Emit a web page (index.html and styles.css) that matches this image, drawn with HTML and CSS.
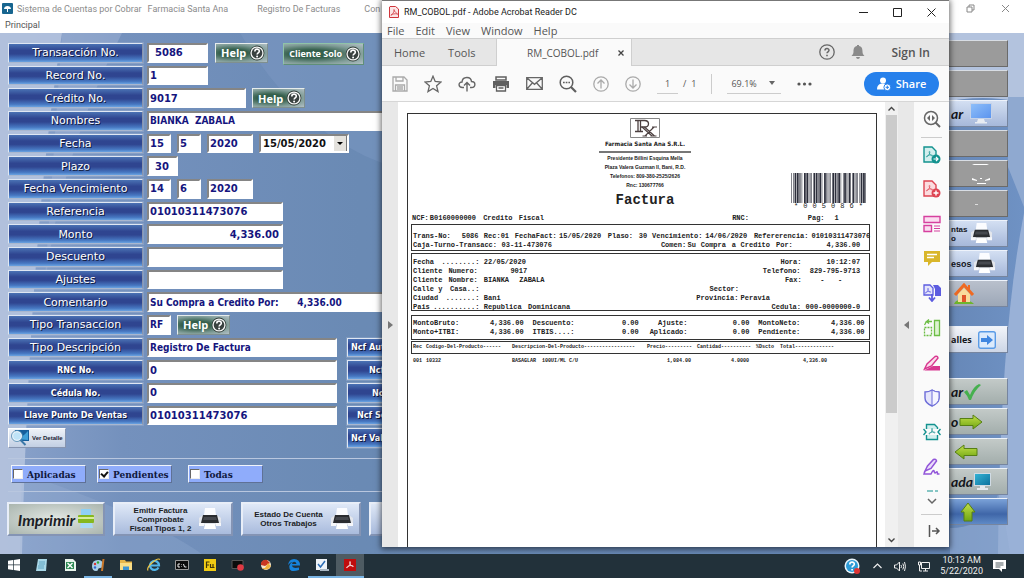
FILE: index.html
```html
<!DOCTYPE html>
<html lang="es">
<head>
<meta charset="utf-8">
<title>Sistema de Cuentas por Cobrar</title>
<link rel="stylesheet" href="styles.css">
</head>
<body>
<svg class="defs" width="0" height="0" aria-hidden="true">
  <defs>
    <linearGradient id="gGreen" x1="0" y1="0" x2="0" y2="1"><stop offset="0" stop-color="#c3e04a"/><stop offset="1" stop-color="#6fa512"/></linearGradient>
    <linearGradient id="gScreen" x1="0" y1="0" x2="1" y2="1"><stop offset="0" stop-color="#8fc0fa"/><stop offset="1" stop-color="#5b93ee"/></linearGradient>
    <linearGradient id="gTeal" x1="0" y1="0" x2="1" y2="1"><stop offset="0" stop-color="#35b5d6"/><stop offset="1" stop-color="#0b6f9c"/></linearGradient>
    <symbol id="printer" viewBox="0 0 24 24">
      <path d="M7 1h10l1 7H6z" fill="#fbfcff"/><path d="M1 11l4-3h14l4 3v7H1z" fill="#e3e6ec"/>
      <path d="M5 8h14l2 8H3z" fill="#2a2c30"/><path d="M6 10h12l1 3H5z" fill="#45484e"/>
      <path d="M7 17h10l1 5H6z" fill="#fff"/><path d="M1 16h5v3H1zM18 16h5v3h-5z" fill="#f6f7fa"/>
    </symbol>
    <symbol id="help" viewBox="0 0 16 16">
      <circle cx="8" cy="8" r="7.400" fill="#2e3a36"/><circle cx="8" cy="8" r="6.600" fill="#f4f6f4"/><circle cx="8" cy="8" r="5.300" fill="#3a4240"/>
      <path d="M5.800 6.400c0-3 4.600-2.900 4.500-.2C10.200 7.800 8.100 8 8.100 9.600" fill="none" stroke="#fff" stroke-width="1.600"/><circle cx="8.100" cy="11.500" r="1" fill="#fff"/>
    </symbol>
    <symbol id="pdf" viewBox="0 0 16 16"><path d="M8 2.500c1.500 0 .3 4-1.200 6.200S3.500 13 2.600 12.300 4.500 9.500 8 9s5.800.2 5.400 1.200-3-.2-4.400-2.200S6.800 2.500 8 2.500z" fill="none" stroke="currentColor" stroke-width="1.200"/></symbol>
    <g id="bStar"><path d="M0 0h1v30h-1zM4 0h1v30h-1zM6 0h3v30h-3zM10 0h3v30h-3zM14 0h1v30h-1z"/></g>
    <g id="b0"><path d="M0 0h1v30h-1zM2 0h1v30h-1zM6 0h3v30h-3zM10 0h3v30h-3zM14 0h1v30h-1z"/></g>
    <g id="b5"><path d="M0 0h3v30h-3zM4 0h1v30h-1zM8 0h3v30h-3zM12 0h1v30h-1zM14 0h1v30h-1z"/></g>
    <g id="b8"><path d="M0 0h3v30h-3zM4 0h1v30h-1zM8 0h1v30h-1zM10 0h3v30h-3zM14 0h1v30h-1z"/></g>
    <g id="b6"><path d="M0 0h1v30h-1zM2 0h3v30h-3zM8 0h3v30h-3zM12 0h1v30h-1zM14 0h1v30h-1z"/></g>
  </defs>
</svg>

<div class="desktop">
  <div class="app">
    <header class="app-title">
      <svg class="app-logo" viewBox="0 0 11 11"><rect width="11" height="11" rx="1" fill="#17658f"/><path d="M2 6c0-4 7-4 7 0z" fill="#fff"/><path d="M5 5h1v4h-1z" fill="#fff"/></svg>
      <span>Sistema de Cuentas por Cobrar</span><span>Farmacia Santa Ana</span><span class="title-gap">Registro De Facturas</span><span class="title-next">Con</span>
      <span class="app-controls">
        <button type="button" aria-label="Restaurar"><svg width="9" height="9" viewBox="0 0 9 9"><path d="M1 3h5v5H1zM3 3V1h5v5H6" fill="none" stroke="#888"/></svg></button>
        <button type="button" aria-label="Cerrar"><svg width="9" height="9" viewBox="0 0 9 9"><path d="M1 1l7 7M8 1l-7 7" stroke="#888"/></svg></button>
      </span>
    </header>
    <nav class="app-menu"><button type="button">Principal</button></nav>

    <main class="app-body">
      <svg class="backdrop" viewBox="0 0 1024 521" preserveAspectRatio="none" aria-hidden="true">
        <defs><linearGradient id="bg" x1="0" y1="0" x2="1" y2="0"><stop offset="0" stop-color="#8ba3cb"/><stop offset=".12" stop-color="#7491bd"/><stop offset=".35" stop-color="#6a8ab4"/><stop offset=".93" stop-color="#6788b8"/><stop offset="1" stop-color="#6f92c4"/></linearGradient></defs>
        <rect width="1024" height="521" fill="url(#bg)"/>
        <path d="M0 0h62Q30 200 22 521H0z" fill="#b7c5df" opacity=".85"/>
        <path d="M62 0h60Q60 120 44 260z" fill="#a3b6d8" opacity=".45"/>
        <path d="M22 440q120 40 180 81H20z" fill="#9db2d6" opacity=".25"/>
        <path d="M240 0h142v130Q300 100 240 0z" fill="#7f9cc6" opacity=".4"/>
        <path d="M940 0h84v70q-40-10-84 0z" fill="#b3c3de"/>
        <path d="M1008 64h16v110l-16-40z" fill="#8fa9d0"/>
        <path d="M1024 180v341h-26q2-220 26-341z" fill="#a4b9dc" opacity=".8"/>
        <path d="M950 495q40 0 50-40l10 66h-60z" fill="#93abd2" opacity=".6"/>
      </svg>

      <form class="work">
        <div class="fields">
          <label for="f1">Transacción No.</label>
          <div class="cell"><input id="f1" class="w60 ind" value="5086"><button type="button" class="help push">Help <svg><use href="#help"/></svg></button><button type="button" class="help solo">Cliente Solo <svg><use href="#help"/></svg></button></div>
          <label for="f2">Record No.</label>
          <div class="cell"><input id="f2" class="w60" value="1"></div>
          <label for="f3">Crédito No.</label>
          <div class="cell"><input id="f3" class="w98" value="9017"><button type="button" class="help">Help <svg><use href="#help"/></svg></button></div>
          <label for="f4">Nombres</label>
          <div class="cell"><input id="f4" class="wide text" value="BIANKA  ZABALA"></div>
          <label for="f5">Fecha</label>
          <div class="cell"><input id="f5" class="w24" value="15"><input aria-label="Mes" class="w24" value="5"><input aria-label="Año" class="w46" value="2020"><select aria-label="Fecha completa"><option>15/05/2020</option></select></div>
          <label for="f6">Plazo</label>
          <div class="cell"><input id="f6" class="w31 ind" value="30"></div>
          <label for="f7">Fecha Vencimiento</label>
          <div class="cell"><input id="f7" class="w24" value="14"><input aria-label="Mes de vencimiento" class="w24" value="6"><input aria-label="Año de vencimiento" class="w46" value="2020"></div>
          <label for="f8">Referencia</label>
          <div class="cell"><input id="f8" class="w136" value="01010311473076"></div>
          <label for="f9">Monto</label>
          <div class="cell"><input id="f9" class="w136 num" value="4,336.00"></div>
          <label for="f10">Descuento</label>
          <div class="cell"><input id="f10" class="w136"></div>
          <label for="f11">Ajustes</label>
          <div class="cell"><input id="f11" class="w136"></div>
          <label for="f12">Comentario</label>
          <div class="cell"><input id="f12" class="wide text" value="Su Compra a Credito Por:      4,336.00"></div>
          <label for="f13">Tipo Transaccion</label>
          <div class="cell"><input id="f13" class="w24 text" value="RF"><button type="button" class="help">Help <svg><use href="#help"/></svg></button></div>
          <label for="f14">Tipo Descripción</label>
          <div class="cell"><input id="f14" class="w190 text" value="Registro De Factura"><button type="button" class="ncf">Ncf Autorizado</button></div>
          <label for="f15" class="small">RNC No.</label>
          <div class="cell"><input id="f15" class="w190" value="0"><button type="button" class="ncf n2">Ncf</button></div>
          <label for="f16" class="small">Cédula No.</label>
          <div class="cell"><input id="f16" class="w190" value="0"><button type="button" class="ncf n3">Ncf</button></div>
          <label for="f17" class="small">Llave Punto De Ventas</label>
          <div class="cell"><input id="f17" class="w190" value="01010311473076"><button type="button" class="ncf n4">Ncf Serie</button></div>
          <button type="button" class="detail"><svg width="18" height="16" viewBox="0 0 18 16"><rect x="4" width="14" height="11" fill="#155f9c"/><path d="M5 9q6-1 12-8v9z" fill="#3fa0d8"/><circle cx="6" cy="6" r="4.500" fill="#bfe3f7" stroke="#e8f3fa" stroke-width="1.500"/><circle cx="6" cy="6" r="5.500" fill="none" stroke="#4a86b0" stroke-width=".8"/><path d="M9.500 10l5 5" stroke="#3c78a8" stroke-width="2"/></svg>Ver Detalle</button>
          <div class="cell"><button type="button" class="ncf last">Ncf Valido</button></div>
        </div>

        <div class="checks">
          <label><input type="checkbox">Aplicadas</label>
          <label><input type="checkbox" checked>Pendientes</label>
          <label><input type="checkbox">Todas</label>
        </div>

        <div class="actions">
          <button type="button" class="print">Imprimir <svg width="16" height="20" viewBox="0 0 16 20"><path d="M3 0h10v7H3z" fill="#8fd0f4"/><rect y="6" width="16" height="8" rx="1" fill="#86b81f"/><path d="M0 8h16v2H0z" fill="#d8ec9c"/><path d="M3 14h11l1 5H2z" fill="#a9d9f5"/></svg></button>
          <button type="button"><span>Emitir Factura<br>Comprobate<br>Fiscal Tipos 1, 2</span><svg width="24" height="24"><use href="#printer"/></svg></button>
          <button type="button"><span>Estado De Cuenta<br>Otros Trabajos</span><svg width="24" height="24"><use href="#printer"/></svg></button>
          <button type="button" aria-label="Otro reporte"></button>
        </div>
      </form>

      <aside class="side">
        <button type="button" class="off" aria-label="Opción 1"></button>
        <button type="button" class="off" aria-label="Opción 2"></button>
        <button type="button" class="hand">ar<svg width="22" height="21" viewBox="0 0 22 21"><rect x=".5" y=".5" width="21" height="15" fill="url(#gScreen)" stroke="#c5d2e8"/><path d="M8 16h6l1 3H7zM5 19h12v1.500H5z" fill="#e8ecf2"/></svg></button>
        <button type="button" class="off" aria-label="Opción 4"></button>
        <button type="button" class="off bits" aria-label="Opción 5"><svg width="20" height="22" viewBox="0 0 20 22"><path d="M3 1h13l2 1H1z" fill="#fff"/><path d="M1 15l5 2v1l-5-1zM19 15l-5 2v1l5-1zM9 15h2v1H9zM6 20h9v1H6z" fill="#fff"/></svg></button>
        <button type="button" class="off bits" aria-label="Opción 6"><svg width="20" height="22" viewBox="0 0 20 22"><path d="M4 11h3v1H4z" fill="#ddd"/></svg></button>
        <button type="button" class="lines"><span>ntas<br>o</span><svg width="23" height="23"><use href="#printer"/></svg></button>
        <button type="button" class="plain">esos<svg width="23" height="23"><use href="#printer"/></svg></button>
        <button type="button" class="home" aria-label="Inicio"><svg width="22" height="22" viewBox="0 0 22 22"><path d="M1 21q2-5 10-4t10 4z" fill="#6fb52c"/><path d="M5 11l6-6 6 6v8H5z" fill="#f9dc9c"/><path d="M2 12l9-10 9 10" fill="none" stroke="#ef6a22" stroke-width="3"/><path d="M15 2h2v5h-2z" fill="#ef6a22"/><path d="M9 12h4v7H9z" fill="#e0552b"/></svg></button>
        <button type="button" class="light gap1">alles<svg width="18" height="18" viewBox="0 0 18 18"><rect x=".7" y=".7" width="16.600" height="16.600" rx="2" fill="#dbeafc" stroke="#5a9be6" stroke-width="1.400"/><path d="M3 7h6V4l6 5-6 5v-3H3z" fill="#3f86e0"/></svg></button>
        <button type="button" class="hand stone gap2">ar<svg width="17" height="18" viewBox="0 0 17 18"><path d="M0 9l3-2 3 5Q9 4 15 1l2 1Q10 8 7 17H5Q3 12 0 9z" fill="#45b04e"/></svg></button>
        <button type="button" class="hand stone">o<svg width="24" height="16" viewBox="0 0 24 16"><path d="M1 4.500h13V1l9 7-9 7v-3.500H1z" fill="url(#gGreen)" stroke="#567f14"/></svg></button>
        <button type="button" class="stone back" aria-label="Anterior"><svg width="24" height="16" viewBox="0 0 24 16"><path d="M23 4.500H10V1L1 8l9 7v-3.500h13z" fill="url(#gGreen)" stroke="#567f14"/></svg></button>
        <button type="button" class="hand stone">ada<svg width="17" height="18" viewBox="0 0 17 18"><rect x=".5" y=".5" width="16" height="12" fill="url(#gTeal)" stroke="#d0dbe4"/><path d="M6 13h5v2h3v2H3v-2h3z" fill="#e4e9ee"/></svg></button>
        <button type="button" class="blue" aria-label="Subir"><svg width="16" height="20" viewBox="0 0 16 20"><path d="M4 19V10H1l7-9 7 9h-3v9z" fill="url(#gGreen)" stroke="#567f14"/></svg></button>
      </aside>
    </main>
  </div>

  <section class="reader">
    <header class="r-title">
      <svg width="10" height="12" viewBox="0 0 10 12" color="#d0353b"><path d="M1 .5h5.500L9.500 3v8.500H.5V1z" fill="#fbe6e6" stroke="#d0353b"/><path d="M5 3.500C6 5 3 9 2 9.200S5 7 8 8 4.500 6 5 3.500z" fill="none" stroke="#d0353b" stroke-width=".8"/></svg>
      <span>RM_COBOL.pdf - Adobe Acrobat Reader DC</span>
      <span class="r-controls">
        <button type="button" aria-label="Minimize"><svg width="9" height="9" viewBox="0 0 9 9"><path d="M0 4.500h9" stroke="#222"/></svg></button>
        <button type="button" aria-label="Maximize"><svg width="9" height="9" viewBox="0 0 9 9"><path d="M.5.5h8v8h-8z" fill="none" stroke="#222"/></svg></button>
        <button type="button" aria-label="Close"><svg width="9" height="9" viewBox="0 0 9 9"><path d="M.5.5l8 8M8.500.5l-8 8" stroke="#222"/></svg></button>
      </span>
    </header>
    <nav class="r-menu"><button type="button">File</button><button type="button">Edit</button><button type="button">View</button><button type="button">Window</button><button type="button">Help</button></nav>
    <div class="r-tabs">
      <div class="r-home"><button type="button">Home</button><button type="button">Tools</button></div>
      <div class="r-doc"><span>RM_COBOL.pdf</span><button type="button" aria-label="Close tab"><svg width="6" height="6" viewBox="0 0 6 6"><path d="M.5.5l5 5M5.500.5l-5 5" stroke="#444" stroke-width="1.300"/></svg></button></div>
      <div class="r-account">
        <button type="button" aria-label="Help"><svg width="16" height="16" viewBox="0 0 16 16" fill="none" stroke="#666"><circle cx="8" cy="8" r="7.200" stroke-width="1.300"/><path d="M6 6.500c0-2.600 4-2.500 4-.2C10 7.800 8 7.800 8 9.300" stroke-width="1.500"/><path d="M8 10.700v1.500" stroke-width="1.600"/></svg></button>
        <button type="button" aria-label="Notifications"><svg width="14" height="16" viewBox="0 0 14 16" fill="#8a8a8a"><path d="M6 1h2v1c3 .6 3.500 3 3.500 5.500 0 2 .7 3.300 2 4.500H.5c1.300-1.200 2-2.500 2-4.500C2.500 5 3 2.600 6 2zM5 13h4q-.4 2-2 2t-2-2z"/></svg></button>
        <button type="button" class="sign">Sign In</button>
      </div>
    </div>
    <div class="r-tools">
      <button type="button" aria-label="Save"><svg width="16" height="16" viewBox="0 0 16 16" fill="none" stroke="#aaa" stroke-width="1.300"><path d="M1 1h11l3 3v11H1zM4 1v4h7V1M3.500 15V9h9v6M5 11h6M5 13h6"/></svg></button>
      <button type="button" aria-label="Star"><svg width="18" height="18" viewBox="0 0 18 18" fill="none" stroke="#666" stroke-width="1.300"><path d="M9 1.200l2.200 5.300 5.800.5-4.400 3.800 1.400 5.700L9 13.400l-5 3.100 1.400-5.700L1 7l5.800-.5z"/></svg></button>
      <button type="button" aria-label="Upload"><svg width="18" height="16" viewBox="0 0 18 16" fill="none" stroke="#666" stroke-width="1.400"><path d="M6 11.500H4.500C0 11.500 0 6 4 6c.5-6 9-6 9.500-.5C18 5.500 18 11.500 13.500 11.500H12M9 15.500V7M6 9.500L9 6.500l3 3"/></svg></button>
      <button type="button" aria-label="Print"><svg width="18" height="16" viewBox="0 0 18 16"><path d="M4 1h10v3H4z" fill="none" stroke="#5f5f5f" stroke-width="1.500"/><path d="M1 5h16v7h-2.500V9h-11v3H1z" fill="#5f5f5f"/><path d="M4.500 9.500h9V15h-9zM6.500 12h5" fill="#fff" stroke="#5f5f5f" stroke-width="1.300"/></svg></button>
      <button type="button" aria-label="Email"><svg width="17" height="13" viewBox="0 0 17 13" fill="none" stroke="#666" stroke-width="1.300"><path d="M.7.7h15.600v11.600H.7zM.7.7l7.800 6.600 7.800-6.600M.7 12.300l5.800-6.500M16.300 12.300l-5.800-6.500"/></svg></button>
      <button type="button" aria-label="Find"><svg width="18" height="18" viewBox="0 0 18 18" fill="none" stroke="#5f5f5f"><circle cx="7.500" cy="7.500" r="6.300" stroke-width="1.500"/><path d="M12 12l5 5" stroke-width="2.200"/><path d="M4 7.500h7" stroke-width="1.700" stroke-dasharray="1.700 1"/></svg></button>
      <button type="button" aria-label="Previous page"><svg width="16" height="16" viewBox="0 0 16 16" fill="none" stroke="#aaa" stroke-width="1.300"><circle cx="8" cy="8" r="7.200"/><path d="M8 12.500V4M4.500 7.500L8 4l3.500 3.500"/></svg></button>
      <button type="button" aria-label="Next page"><svg width="16" height="16" viewBox="0 0 16 16" fill="none" stroke="#aaa" stroke-width="1.300"><circle cx="8" cy="8" r="7.200"/><path d="M8 3.500V12M4.500 8.500L8 12l3.500-3.500"/></svg></button>
      <span class="pager"><input aria-label="Page" value="1"><span>/</span><span>1</span></span>
      <button type="button" class="zoom-level">69.1%<svg width="6" height="4" viewBox="0 0 6 4"><path d="M0 0h6L3 4z" fill="#666"/></svg></button>
      <button type="button" aria-label="More" class="more"><svg width="15" height="4" viewBox="0 0 15 4" fill="#555"><circle cx="2" cy="2" r="1.600"/><circle cx="7.500" cy="2" r="1.600"/><circle cx="13" cy="2" r="1.600"/></svg></button>
      <button type="button" class="share"><svg width="14" height="14" viewBox="0 0 14 14"><circle cx="6" cy="3.500" r="3" fill="#fff"/><path d="M0 12.500c0-5 3-6 6-6s4 1 5 3v3z" fill="#fff"/><circle cx="10.300" cy="10.300" r="3.400" fill="#fff" stroke="#2680eb"/><path d="M8.600 10.300h3.400M10.300 8.600V12" stroke="#2680eb"/></svg>Share</button>
    </div>

    <div class="r-main">
      <div class="r-gutter"><svg width="5" height="8" viewBox="0 0 5 8"><path d="M0 0v8l5-4z" fill="#777"/></svg></div>
      <div class="r-page">
        <article class="paper">
          <div class="brand">
            <svg class="rx" width="30" height="20" viewBox="0 0 30 20"><path d="M.5.500h29v19H.5z" fill="#fff" stroke="#888"/><g fill="none" stroke="#4c4040"><path d="M5 2.500h9.500q4 0 4 3.300T14.500 9H10M8 2.500v11M10.500 2.500v11M5 13.500h8" stroke-width="1.300"/><path d="M12 9l10 9M14.500 9l10 9M24 9l-9 9M22 9h5M12.500 18h4.500M20.500 18h6" stroke-width="1.200"/></g></svg>
            <strong>Farmacia Santa Ana S.R.L.</strong>
            <hr>
            <p>Presidente Billini Esquina Mella<br>Plaza Valera Guzman II, Bani, R.D.<br>Telefonos: 809-380-2525/2626<br>Rnc: 130677766</p>
            <h1>Factura</h1>
            <div class="barcode">
              <svg viewBox="0 0 127 30" preserveAspectRatio="none" fill="#2d2f3c"><use href="#bStar"/><use href="#b0" x="16"/><use href="#b0" x="32"/><use href="#b5" x="48"/><use href="#b0" x="64"/><use href="#b8" x="80"/><use href="#b6" x="96"/><use href="#bStar" x="112"/></svg>
              <div><span>*</span><span>0</span><span>0</span><span>5</span><span>0</span><span>8</span><span>6</span><span>*</span></div>
            </div>
          </div>
          <div class="ln head"><span class="c0">NCF:</span><span class="c4">B0160000000</span><span class="c16">Credito</span><span class="c24">Fiscal</span><span class="c72">RNC:</span><span class="c89">Pag:</span><span class="c95">1</span></div>
          <section class="box b1">
            <div class="ln"><span class="c0">Trans-No:</span><span class="c11">5086</span><span class="c16">Rec:01</span><span class="c23">FechaFact:</span><span class="c33">15/05/2020</span><span class="c44">Plaso:</span><span class="c51">30</span><span class="c54">Vencimiento:</span><span class="c66">14/06/2020</span><span class="c77">Refererencia:</span><span class="c90">01010311473076</span></div>
            <div class="ln"><span class="c0">Caja-Turno-Transacc:</span><span class="c20">03-11-473076</span><span class="c56">Comen:</span><span class="c62">Su</span><span class="c65">Compra</span><span class="c72">a</span><span class="c74">Credito</span><span class="c82">Por:</span><span class="e101">4,336.00</span></div>
          </section>
          <section class="box b2">
            <div class="ln"><span class="c0">Fecha</span><span class="e15">........:</span><span class="c16">22/05/2020</span><span class="c83">Hora:</span><span class="e101">10:12:07</span></div>
            <div class="ln"><span class="c0">Cliente</span><span class="c8">Numero:</span><span class="c22">9017</span><span class="c79">Telefono:</span><span class="e101">829-795-9713</span></div>
            <div class="ln"><span class="c0">Cliente</span><span class="c8">Nombre:</span><span class="c16">BIANKA</span><span class="c24">ZABALA</span><span class="c84">Fax:</span><span class="c92">-</span><span class="c96">-</span></div>
            <div class="ln"><span class="c0">Calle y</span><span class="e15">Casa..:</span><span class="c67">Sector:</span></div>
            <div class="ln"><span class="c0">Ciudad</span><span class="e15">.......:</span><span class="c16">Bani</span><span class="c64">Provincia:</span><span class="c74">Peravia</span></div>
            <div class="ln"><span class="c0">Pais</span><span class="e15">..........:</span><span class="c16">Republica</span><span class="c26">Dominicana</span><span class="c81">Cedula:</span><span class="e101">000-0000000-0</span></div>
          </section>
          <section class="box b3">
            <div class="ln"><span class="c0">MontoBruto:</span><span class="e25">4,336.00</span><span class="c27">Descuento:</span><span class="e51">0.00</span><span class="e62">Ajuste:</span><span class="e76">0.00</span><span class="c78">MontoNeto:</span><span class="e102">4,336.00</span></div>
            <div class="ln"><span class="c0">Monto+ITBI:</span><span class="e25">4,336.00</span><span class="c27">ITBIS....:</span><span class="e51">0.00</span><span class="e62">Aplicado:</span><span class="e76">0.00</span><span class="c78">Pendiente:</span><span class="e102">4,336.00</span></div>
          </section>
          <section class="box b4">
            <div class="ln items"><span>Rec</span><span>Codigo-Del-Producto------</span><span>Descripcion-Del-Producto-----------------</span><span>Precio---------</span><span>Cantidad----------</span><span>%Dscto</span><span>Total-------------</span></div>
          </section>
          <div class="ln items row"><span>001</span><span>10332</span><span>BASAGLAR&nbsp; 100UI/ML C/U</span><span class="mid">1,084.00</span><span class="mid">4.0000</span><span></span><span class="mid">4,336.00</span></div>
        </article>
      </div>
      <div class="r-scroll"><svg width="7" height="5" viewBox="0 0 7 5"><path d="M.5 4.500l3-3 3 3" fill="none" stroke="#444" stroke-width="1.400"/></svg><i></i><svg width="7" height="5" viewBox="0 0 7 5"><path d="M.5.500l3 3 3-3" fill="none" stroke="#444" stroke-width="1.400"/></svg></div>
      <div class="r-gutter"><svg width="5" height="8" viewBox="0 0 5 8"><path d="M5 0v8L0 4z" fill="#777"/></svg></div>
      <aside class="r-rail">
        <button type="button" aria-label="Search tools"><svg viewBox="0 0 18 18" fill="none" stroke="#666"><circle cx="8" cy="8" r="6.500" stroke-width="1.500"/><path d="M12.500 12.500l4.500 4.500" stroke-width="2"/><path d="M7 5v6L4 8zM9 5v6l3-3z" fill="#666" stroke="none"/></svg></button>
        <button type="button" class="ruled" aria-label="Export PDF"><svg viewBox="0 0 18 18" color="#13928f"><path d="M1 1h8l4 4v11H1z" fill="#d3efee" stroke="#13928f" stroke-width="1.400"/><use href="#pdf" x="2" y="4" width="9" height="9"/><circle cx="13" cy="13" r="4.500" fill="#13928f"/><path d="M10.500 13h4.500M13 11l2 2-2 2" stroke="#fff" stroke-width="1.200" fill="none"/></svg></button>
        <button type="button" aria-label="Create PDF"><svg viewBox="0 0 18 18" color="#dd4452"><path d="M1 1h8l4 4v11H1z" fill="#fbdcdf" stroke="#dd4452" stroke-width="1.400"/><use href="#pdf" x="2" y="4" width="9" height="9"/><circle cx="13" cy="13" r="4.500" fill="#dd4452"/><path d="M10.500 13h5M13 10.500v5" stroke="#fff" stroke-width="1.400"/></svg></button>
        <button type="button" aria-label="Organize"><svg viewBox="0 0 18 18" stroke="#d6409f" stroke-width="1.400" fill="#fbdcf0"><path d="M1 1.500h16v6H1zM1 10.500h7.500v6H1z"/><path d="M11 11h6M11 13.500h6M11 16h6" stroke-width="1"/></svg></button>
        <button type="button" aria-label="Comment"><svg viewBox="0 0 18 18"><path d="M1 2h16v11H9l-4 4v-4H1z" fill="#d9b62a"/><path d="M4 5.500h10M4 8.500h7" stroke="#fff" stroke-width="1.300"/></svg></button>
        <button type="button" aria-label="Combine"><svg viewBox="0 0 18 18" color="#5c5ce0"><path d="M1 1h6l3 3v7H1z" fill="#e4e4fb" stroke="#5c5ce0" stroke-width="1.300"/><use href="#pdf" x="1" y="3" width="8" height="8"/><path d="M10 1h5l3 3v8h-6V5z" fill="#5c5ce0"/><path d="M9 10v6M6 13.500L9 17l3-3.500" fill="none" stroke="#5c5ce0" stroke-width="1.800"/></svg></button>
        <button type="button" aria-label="Compress"><svg viewBox="0 0 18 18" stroke="#6cbd45" stroke-width="1.300" fill="none"><path d="M11.500 1.500h5v15h-5z" fill="#ddf3d0"/><path d="M1.500 8.500h7v8h-7z" stroke-dasharray="2 1"/><path d="M9 2.500H3.500L6 .5M3.500 2.500L6 4.500M3.500 2.500L1.500 6"/></svg></button>
        <button type="button" aria-label="Edit"><svg viewBox="0 0 18 18"><path d="M1.500 15l2.500-5 8-7.500q2.500-1 3 1.500L8.500 12z" fill="#fbdcea" stroke="#d83790" stroke-width="1.400"/><path d="M1 16.500l9-4.500h7v4.500z" fill="#d83790"/></svg></button>
        <button type="button" aria-label="Protect"><svg viewBox="0 0 18 18"><path d="M9 1q3 2 7 2v6q0 5-7 8-7-3-7-8V3q4 0 7-2z" fill="#e6e6fb" stroke="#6c6cd8" stroke-width="1.400"/><path d="M9 1q3 2 7 2v6q0 5-7 8z" fill="#f5f5ff" stroke="#6c6cd8"/></svg></button>
        <button type="button" aria-label="Optimize"><svg viewBox="0 0 18 18" color="#13928f"><path d="M3.500 6V1.500h8l3 3V6M3.500 12v4.500h11V12" fill="#d3efee" stroke="#13928f" stroke-width="1.400"/><use href="#pdf" x="4.500" y="4" width="9" height="9"/><path d="M.5 6l2.500 3-2.500 3M17.500 6L15 9l2.500 3" fill="none" stroke="#13928f" stroke-width="1.400"/></svg></button>
        <button type="button" aria-label="Fill and sign"><svg viewBox="0 0 18 18" fill="none" stroke="#9256d9" stroke-width="1.500"><path d="M2 13l2.500-5 6-6.500q2.500-1 3 1.500L8 10.500z" fill="#eadcfa"/><path d="M2 13l-1 3h7q2.500-5 3-3t1 2 1.500-1 1 2h2"/></svg></button>
        <button type="button" class="expand" aria-label="More tools"><svg viewBox="0 0 18 18" fill="none"><path d="M4 1h6M12 1h3" stroke="#13928f"/><path d="M5 9l4 4 4-4" stroke="#666" stroke-width="1.500"/></svg></button>
        <button type="button" class="ruled collapse" aria-label="Collapse"><svg viewBox="0 0 18 18" fill="none" stroke="#555" stroke-width="1.500"><path d="M6.500 3v12M9 9h7M13 6l3 3-3 3"/></svg></button>
      </aside>
    </div>
  </section>

  <footer class="taskbar">
    <div class="tasks">
      <button type="button" aria-label="Start"><svg viewBox="0 0 14 14" fill="#fff"><path d="M1 2.700l5-.7v4.600H1zM6.700 1.900L13 1v5.600H6.700zM1 7.300h5V12l-5-.7zM6.700 7.300H13V13l-6.300-.9z"/></svg></button>
      <button type="button" aria-label="Notepad"><svg viewBox="0 0 14 14"><path d="M3 1h9l-1 12H1z" fill="#a9d8e8"/><path d="M4 4h6M4 6h6M3 8h6M3 10h6" stroke="#5fa3c0"/></svg></button>
      <button type="button" aria-label="Excel"><svg viewBox="0 0 14 14"><path d="M2 1h8l3 3v9H2z" fill="#e9f4ec"/><path d="M3 4h8v7H3z" fill="#2f8a55"/><path d="M4.500 5l5 5M9.500 5l-5 5" stroke="#fff" stroke-width="1.400"/></svg></button>
      <button type="button" class="run" aria-label="Paint"><svg viewBox="0 0 14 14"><path d="M1 8q0-6 6-6 5 0 5 5 0 3-3 3-2 0-2 1.500Q7 13 5 13q-4 0-4-5z" fill="#a8cfe8"/><circle cx="4" cy="6" r="1.200" fill="#d33"/><circle cx="7" cy="4.500" r="1.200" fill="#3a3"/><circle cx="4" cy="9.500" r="1.200" fill="#36c"/><path d="M12.500 1L11 13" stroke="#c9772a" stroke-width="2"/></svg></button>
      <button type="button" aria-label="Explorer"><svg viewBox="0 0 14 14"><path d="M1 2h5l1 1.500h6V12H1z" fill="#e6b54a"/><path d="M1 5h12v7H1z" fill="#f9dd86"/><path d="M4 12V8.500h6V12z" fill="#3d94d2"/></svg></button>
      <button type="button" aria-label="Internet Explorer"><svg viewBox="0 0 14 14" fill="none"><path d="M11.500 9.500A4.500 4.500 0 1 1 12 7.500H4" stroke="#53b6ea" stroke-width="2.200"/><path d="M1 12.500C-1 9 10-1 13 1.500" stroke="#f0c541" stroke-width="1.200"/></svg></button>
      <button type="button" aria-label="Console"><svg viewBox="0 0 14 14"><path d="M.5 2.500h13v9H.5z" fill="#0b0b0b" stroke="#999"/><path d="M5 6H3v3h2M6.500 6v.5M6.500 8.500V9M8.500 6l1 3h2" stroke="#eee" fill="none"/></svg></button>
      <button type="button" aria-label="Fireworks"><svg viewBox="0 0 14 14"><path d="M1 1h12v12H1z" fill="#f1cb13"/><path d="M3.500 10V4h3M3.500 7h2.500M7.500 6v3.500H10V6M10 9.500h1.500" stroke="#40360a" stroke-width="1.200" fill="none"/></svg></button>
      <button type="button" aria-label="Recorder"><svg viewBox="0 0 14 14"><path d="M1 2.500h11v8H1z" fill="#0c0c0c" stroke="#555"/><circle cx="9.500" cy="9.500" r="3.300" fill="#e03a44"/></svg></button>
      <button type="button" aria-label="Browser"><svg viewBox="0 0 14 14"><circle cx="7" cy="7" r="5" fill="#f3e6cf"/><path d="M2 5q2-4 6-3l3 3-5 3-4-1z" fill="#c93722"/><path d="M3 10q5 4 9-2l-3-3-3 5z" fill="#f0b23c"/></svg></button>
      <button type="button" aria-label="Edge"><svg viewBox="0 0 14 14"><path d="M1 7Q2 1 7 1q6 0 6 6.500H5q.5 3.500 7 2v2.500Q2 15.500 2.300 8q.5-3 3.700-4Q3 4 1 7zM5 6h4.500Q9 3.500 7 3.700 5.300 4 5 6z" fill="#1683dc" fill-rule="evenodd"/></svg></button>
      <button type="button" class="run" aria-label="Cobol"><svg viewBox="0 0 14 14"><path d="M1 1h11v11H1z" fill="#eef3f8"/><path d="M3 6l2.500 3L10 3" stroke="#2b6cb4" stroke-width="1.500" fill="none"/><path d="M5 12h9" stroke="#aab8c4" stroke-width="2"/></svg></button>
      <button type="button" class="run active" aria-label="Acrobat"><svg viewBox="0 0 14 14" color="#fff"><path d="M1 1h12v12H1z" fill="#c00d0d"/><use href="#pdf" x="2" y="2" width="10" height="10"/></svg></button>
    </div>
    <div class="tray">
      <button type="button" aria-label="Support"><svg width="17" height="17" viewBox="0 0 17 17"><circle cx="8" cy="8" r="7.500" fill="#eaf5fc"/><circle cx="8" cy="8" r="6" fill="#2d9bd6"/><path d="M5.800 6.400c0-3 4.600-2.900 4.500-.2C10.200 7.800 8.100 8 8.100 9.500M8.100 11v1.500" stroke="#fff" stroke-width="1.600" fill="none"/><circle cx="13" cy="13" r="3" fill="#d33"/></svg></button>
      <button type="button" aria-label="Hidden icons"><svg width="9" height="6" viewBox="0 0 9 6"><path d="M.5 5l4-4 4 4" fill="none" stroke="#eee" stroke-width="1.200"/></svg></button>
      <button type="button" aria-label="Volume"><svg width="12" height="11" viewBox="0 0 12 11" fill="none" stroke="#eee"><path d="M.5 4h2l3-3v9l-3-3h-2zM7 4q1 1.500 0 3M8.800 2.500q2 3 0 6M10.500 1q2 4.500 0 9"/></svg></button>
      <button type="button" aria-label="Network"><svg width="12" height="11" viewBox="0 0 12 11" fill="none" stroke="#eee"><path d="M3.500 1.500h8v6h-8zM5 10h5M7.500 7.500V10M.5 1v3h2V1zM1.500 4v6H4"/></svg></button>
      <time>10:13 AM<br>5/22/2020</time>
      <button type="button" aria-label="Action center"><svg width="13" height="12" viewBox="0 0 13 12"><path d="M0 0h13v9H9v3L6 9H0z" fill="#fff"/><path d="M2.500 3h8M2.500 5h8M2.500 7h5" stroke="#24323a" stroke-width=".8"/></svg></button>
    </div>
  </footer>
</div>
</body>
</html>
```
FILE: styles.css
```css
* { box-sizing: border-box; }
body { margin: 0; font-family: "Open Sans", "Noto Sans", sans-serif; }
button { margin: 0; padding: 0; border: 0; background: none; font: inherit; color: inherit; white-space: nowrap; }
svg { display: block; flex: none; }
.defs { position: absolute; }
.desktop { position: relative; min-height: 100vh; display: flex; flex-direction: column; overflow: hidden; }

/* Main application */
.app { flex: 1; display: flex; flex-direction: column; background: #fff; }
.app-title { display: flex; align-items: center; gap: 6px; height: 17px; padding-left: 2px; font: 9px Roboto, sans-serif; color: #8b8b8b; white-space: pre; }
.app-logo { width: 11px; height: 11px; margin-right: -2px; }
.title-gap { margin-left: 23px; }
.title-next { margin-left: 18px; }
.app-controls { margin-left: auto; display: flex; gap: 26px; padding-right: 14px; }
.app-menu { height: 16px; padding-left: 5px; font: 9px/16px Roboto, sans-serif; color: #555; }
.app-body { position: relative; flex: 1; display: flex; justify-content: space-between; background: #6a8ab4; }
.backdrop { position: absolute; inset: 0; width: 100%; height: 100%; }
.work { position: relative; flex: 1; min-width: 0; padding: 10px 0 17px 8px; }

.fields { display: grid; grid-template-columns: 135px 1fr; grid-template-rows: repeat(18, 1fr); gap: 3px 4px; height: 405px; }
.fields > label, .ncf {
  display: flex; align-items: center; justify-content: center;
  border: 1px solid; border-color: #dfe7f3 #8894ae #a9b7cf #dfe7f3; outline: 1px solid #b4c3dc44;
  background: linear-gradient(#4a72b4, #2f4590 35%, #2f4590 55%, #4778c2 85%, #6ba4e2);
  color: #fff; font: 11px "DejaVu Sans", sans-serif; text-shadow: 1px 1px 0 #111a3a;
}
.fields > label.small, .ncf { font: bold 9px "DejaVu Sans Condensed", "DejaVu Sans", sans-serif; }
.cell { display: flex; align-items: stretch; gap: 6px; min-width: 0; }
.cell input {
  min-width: 0; padding: 0 0 0 1px; border: 2px solid; border-color: #858585 #fff #fff #858585; border-radius: 0;
  background: #fff; color: #15157e; font: bold 10px "DejaVu Sans", sans-serif; white-space: pre;
}
.cell input.text { padding-left: 1px; font-family: "DejaVu Sans Condensed", "DejaVu Sans", sans-serif; }
.cell input.ind { padding-left: 6px; }
.cell input.num { padding-right: 2px; text-align: right; }
.w24 { width: 24px; } .w31 { width: 31px; } .w46 { width: 46px; } .w60 { width: 61px; }
.w98 { width: 99px; } .w136 { width: 136px; } .w190 { width: 190px; } .cell .wide { width: 300px; }
.cell select {
  appearance: none; width: 90px; padding: 0 0 0 2px; border: 2px solid; border-color: #858585 #fff #fff #858585; border-radius: 0;
  color: #111; font: bold 10px "DejaVu Sans", sans-serif;
  background: #fff url("data:image/svg+xml,%3Csvg xmlns='http://www.w3.org/2000/svg' width='13' height='16'%3E%3Cpath d='M0 0h13v16H0z' fill='%23777'/%3E%3Cpath d='M0 0h12v15H0z' fill='%23e4e2dd'/%3E%3Cpath d='M3 6h6L6 9z'/%3E%3C/svg%3E") no-repeat right center;
}
.help {
  display: flex; align-items: center; gap: 3px; padding: 0 2px 0 5px; border: 1px solid; border-color: #e6ecec #7f8f8f #7f8f8f #e6ecec;
  background: radial-gradient(ellipse at 35% 50%, #35604d 30%, #7f9c96 65%, #b2c0c6); color: #fff; font: bold 11px "Open Sans", sans-serif;
}
.help svg { width: 16px; height: 16px; }
.help.push { margin-left: 1px; }
.help.solo { margin: 0 0 -2px 9px; padding-left: 5px; font-size: 9px; border-color: #8fc3a8 #5f8f78 #5f8f78 #8fc3a8; }
.ncf { width: 110px; margin-left: 4px; padding-left: 3px; justify-content: flex-start; }
.ncf.n2 { padding-left: 21px; }
.ncf.n3 { padding-left: 24px; }
.ncf.n4 { padding-left: 9px; }
.ncf.last { margin-left: 200px; }
.detail { display: flex; align-items: center; gap: 3px; justify-self: start; padding: 0 2px; border: 1px solid; border-color: #fff #8795b0 #8795b0 #fff; background: linear-gradient(#eef2f8, #c2cfe3); color: #223; font: bold 6px "Liberation Sans", sans-serif; }

.checks { display: flex; gap: 11px; margin-top: 10px; padding: 6px 0 8px 3px; border: 1px solid #b9c7df; border-width: 1px 0; }
.checks label { display: flex; align-items: center; gap: 4px; width: 75px; height: 18px; border: 1px solid; border-color: #f0f4fb #5f7196 #5f7196 #f0f4fb; background: #8facfb; color: #10183c; font: bold 10px "DejaVu Serif Condensed", "DejaVu Serif", serif; }
.checks label:last-child { margin-left: 5px; }
.checks input { appearance: none; position: relative; width: 10px; height: 10px; margin: 0 0 0 1px; border: 1px solid; border-color: #666 #eee #eee #666; background: #fff; }
.checks input:checked::after { content: ""; position: absolute; left: 2px; top: 0; width: 3px; height: 5px; border: solid #111; border-width: 0 2px 2px 0; transform: rotate(40deg); }

.actions { display: flex; gap: 8px; margin-top: 10px; }
.actions button { display: flex; align-items: center; justify-content: center; gap: 7px; width: 120px; height: 34px; padding-left: 6px; border: 2px solid; border-color: #e8eef8 #8494b4 #8494b4 #e8eef8; background: linear-gradient(#dfe8f7, #a9bbdd); color: #1b1d25; font: bold 8px/9px "Liberation Sans", sans-serif; }
.actions .print { width: 98px; gap: 3px; margin-left: -1px; padding: 0; background: radial-gradient(#e2e8e4, #aab5ae); font: italic bold 16px Lato, sans-serif; }

.side { position: relative; width: 78px; margin-right: 16px; padding-top: 7px; display: flex; flex-direction: column; gap: 3px; }
.side button { display: flex; align-items: center; gap: 5px; height: 27px; padding-left: 20px; border: 1px solid; border-color: #eef3fb #76859f #76859f #eef3fb; background: linear-gradient(#d3dff2, #a6b8da); color: #14161c; }
.side .off { background: #9b9b9b; border-color: #d8dde4 #6a6a6a #6a6a6a #d8dde4; }
.side .bits { padding-left: 40px; }
.side .hand { font: italic bold 14px Lato, sans-serif; }
.side .hand:nth-child(3) { gap: 7px; }
.side .lines { font: bold 8px/9px "Liberation Sans", sans-serif; gap: 3px; }
.side .lines span { text-align: left; }
.side .plain { font: bold 9px "Liberation Sans", sans-serif; gap: 1px; }
.side .home { padding-left: 22px; background: linear-gradient(#b9c0cc, #9da8b8); }
.side .gap1 { margin-top: 16px; }
.side .gap2 { margin-top: 22px; }
.side .light { font: bold 9px "Open Sans", sans-serif; gap: 6px; background: linear-gradient(#f2f4f9, #cdd6e6); }
.side .stone { background: linear-gradient(#c3cac8, #a3aeac); gap: 1px; }
.side .back { padding-left: 23px; }
.side .blue { padding-left: 29px; background: linear-gradient(#7ba2d8, #3f66a8 60%, #5f8ac6); }

/* PDF reader window */
.reader { position: absolute; left: 382px; right: 75px; top: 0; bottom: 31px; display: flex; flex-direction: column; background: #fff; border-top: 1px solid #777; box-shadow: 0 1px 6px 1px #0009; color: #555; }
.r-title { display: flex; align-items: center; gap: 5px; height: 22px; padding: 0 13px 0 7px; font: 9px Roboto, sans-serif; color: #222; }
.r-controls { margin-left: auto; display: flex; gap: 25px; }
.r-menu { display: flex; gap: 11px; height: 15px; padding-left: 5px; background: #fafafa; font-size: 11px; line-height: 16px; }
.r-tabs { display: flex; height: 28px; background: #e6e6e6; border: 1px solid #cfcfcf; border-width: 1px 0; font-size: 11px; }
.r-home { display: flex; gap: 23px; width: 114px; padding-left: 12px; }
.r-doc { display: flex; align-items: center; justify-content: space-between; width: 136px; margin-bottom: -1px; padding: 0 7px 0 30px; background: #fafafa; border: 1px solid #cfcfcf; border-width: 0 1px; font-size: 10px; }
.r-account { display: flex; align-items: center; gap: 16px; margin-left: auto; padding-right: 19px; }
.r-account .sign { margin-left: 10px; font-weight: 600; font-size: 12px; }
.r-tools { display: flex; align-items: center; gap: 16px; height: 36px; padding: 0 10px; background: #fafafa; border-bottom: 1px solid #d6d6d6; font-size: 9px; }
.pager { display: flex; gap: 5px; align-items: center; margin-right: -1px; padding-right: 15px; height: 20px; border-right: 1px solid #ccc; }
.pager input { width: 21px; height: 20px; padding: 0; border: 0; border-bottom: 1px solid #ccc; background: none; text-align: center; font: inherit; color: inherit; }
.zoom-level { display: flex; align-items: center; justify-content: space-between; width: 54px; height: 20px; padding: 0 6px 0 4px; border-bottom: 1px solid #ccc; }
.share { display: flex; align-items: center; justify-content: center; gap: 5px; width: 75px; height: 24px; margin-left: auto; border-radius: 12px; background: #2680eb; color: #fff; font-weight: 600; font-size: 11px; }
.r-main { flex: 1; min-height: 0; display: flex; background: #e9e9e9; }
.r-gutter { display: flex; align-items: center; justify-content: center; width: 16px; background: #e8e8e8; }
.r-page { flex: 1; min-width: 0; padding: 11px 8px 0 9px; background: #fff; overflow: hidden; }
.r-scroll { display: flex; flex-direction: column; align-items: center; gap: 4px; width: 13px; padding: 4px 0; background: #f0f0f0; }
.r-scroll i { width: 11px; flex: 0 1 298px; background: #cbcbcb; }
.r-scroll svg:last-child { margin-top: auto; }
.r-rail { display: flex; flex-direction: column; align-items: center; width: 35px; padding-top: 0; background: #fafafa; }
.r-rail button { width: 21px; height: 35px; display: flex; align-items: center; justify-content: center; }
.r-rail svg { width: 18px; height: 18px; }
.r-rail .ruled { border-top: 1px solid #ccc; }
.r-rail .expand { height: 30px; }
.r-rail .collapse { height: 33px; }

/* Invoice */
.paper { height: 100%; min-height: 460px; padding: 4px 6px 0 3px; border: 1px solid #333; border-bottom: 0; background: #fff; color: #222; font: bold 7px/9px "Liberation Mono", monospace; }
.brand { position: relative; display: flex; flex-direction: column; align-items: center; padding-left: 9px; text-align: center; }
.brand strong { margin-top: 1px; font: bold 6px/9px "DejaVu Sans Condensed", "DejaVu Sans", sans-serif; }
.brand hr { width: 92px; height: 2px; margin: 3px 0 1px; border: 0; background: #777; }
.brand p { margin: 0; font: bold 5px/9px "Liberation Sans", sans-serif; }
.brand h1 { margin: 2px 0 1px; font: bold 14px/16px "Liberation Mono", monospace; }
.barcode { position: absolute; right: 4px; top: 55px; width: 75px; }
.barcode svg { width: 100%; height: 30px; }
.barcode div { display: flex; justify-content: space-between; padding: 0 3px; font: 7px/7px "Liberation Mono", monospace; }
.ln { display: grid; grid-template-columns: repeat(103, minmax(0, 1fr)); height: 9px; white-space: pre; }
.ln span { grid-row: 1; width: 0; }
.ln.head { margin: 5px 0 1px 1px; }
.box { border: 1px solid #333; padding-left: 1px; }
.b1 { height: 27px; padding-top: 7px; }
.b2 { height: 58px; margin-top: 2px; padding-top: 4px; }
.b3 { height: 25px; margin-top: 4px; padding-top: 3px; }
.b4 { height: 13px; margin-top: 1px; }
.ln.items { grid-template-columns: 13px 86px 135px 50px 59px 24px 1fr; align-items: center; height: 11px; font-size: 5px; }
.ln.items span { width: auto; grid-row: auto; }
.ln.items.row { margin: 2px 0 0 2px; }
.ln.items .mid { padding-left: 20px; }
.ln.items .mid:nth-child(5) { padding-left: 34px; }
.ln.items .mid:last-child { padding-left: 23px; }
.c0 { grid-column: 1; } .c4 { grid-column: 5; } .c8 { grid-column: 9; } .c11 { grid-column: 12; } .c16 { grid-column: 17; }
.c20 { grid-column: 21; } .c22 { grid-column: 23; } .c23 { grid-column: 24; } .c24 { grid-column: 25; } .c26 { grid-column: 27; } .c27 { grid-column: 28; }
.c33 { grid-column: 34; } .c44 { grid-column: 45; } .c51 { grid-column: 52; } .c54 { grid-column: 55; } .c56 { grid-column: 57; }
.c62 { grid-column: 63; } .c64 { grid-column: 65; } .c65 { grid-column: 66; } .c66 { grid-column: 67; } .c67 { grid-column: 68; } .c72 { grid-column: 73; } .c74 { grid-column: 75; }
.c77 { grid-column: 78; } .c78 { grid-column: 79; } .c79 { grid-column: 80; } .c81 { grid-column: 82; } .c82 { grid-column: 83; } .c83 { grid-column: 84; }
.c84 { grid-column: 85; } .c89 { grid-column: 90; } .c90 { grid-column: 91; } .c92 { grid-column: 93; } .c95 { grid-column: 96; } .c96 { grid-column: 97; }
.ln .e15, .ln .e25, .ln .e51, .ln .e62, .ln .e76, .ln .e101, .ln .e102 { width: auto; justify-self: end; }
.e15 { grid-column: 3 / 16; } .e25 { grid-column: 10 / 26; } .e51 { grid-column: 40 / 52; } .e62 { grid-column: 50 / 63; }
.e76 { grid-column: 68 / 77; } .e101 { grid-column: 86 / 102; } .e102 { grid-column: 88 / 103; }

/* Taskbar */
.taskbar { position: relative; display: flex; justify-content: space-between; height: 24px; background: #22313a; color: #eee; }
.tasks { display: flex; }
.tasks button { display: flex; align-items: center; justify-content: center; width: 28px; border-bottom: 2px solid transparent; }
.tasks svg { width: 14px; height: 14px; }
.tasks .run { border-bottom-color: #79b4e4; }
.tasks .active { background: #4e5b62; }
.tray { display: flex; align-items: center; gap: 12px; padding-right: 18px; }
.tray time { font: 9px/11px Roboto, sans-serif; text-align: center; margin: 0 -2px; }
```
